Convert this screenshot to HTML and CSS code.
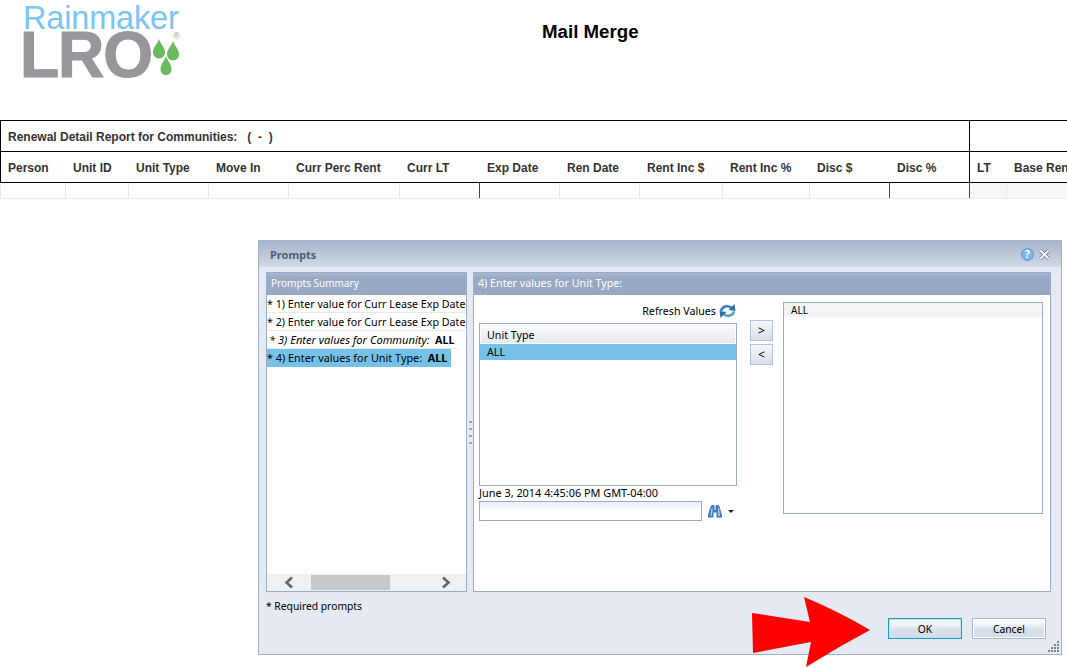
FILE: index.html
```html
<!DOCTYPE html>
<html lang="en">
<head>
    <meta charset="UTF-8">
    <meta name="viewport" content="width=device-width, initial-scale=1.0">
    <title>Mail Merge</title>
    <link rel="stylesheet" href="styles.css">
</head>
<body>
    <header class="page-head">
        <div class="logo">
            <div class="logo-top">Rainmaker</div>
            <div class="logo-main">LRO</div>
            <span class="logo-reg">®</span>
            <svg class="logo-drops" width="27" height="37" viewBox="0 0 27 37">
                <path fill="#6cba5f" d="M6 0C7.500 5 12 8 12 13.500a6 6 0 0 1-12 0C0 8 4.500 5 6 0Z"/>
                <path fill="#6cba5f" d="M20 2C21.500 7 26 10 26 15.500a6 6 0 0 1-12 0C14 10 18.500 7 20 2Z"/>
                <path fill="#6cba5f" d="M13 17C14.500 22 18.500 25 18.500 30.500a5.500 5.500 0 0 1-11 0C7.500 25 11.500 22 13 17Z"/>
            </svg>
        </div>
        <h1 class="page-title">Mail Merge</h1>
    </header>

    <section class="report">
        <div class="report-row row-title">
            <div class="report-name">Renewal Detail Report for Communities: &nbsp; ( &nbsp;- &nbsp;)</div>
            <div class="report-side"></div>
        </div>
        <div class="report-row row-head">
            <div class="row-start">Person</div><div>Unit ID</div><div>Unit Type</div><div>Move In</div>
            <div>Curr Perc Rent</div><div>Curr LT</div><div>Exp Date</div><div>Ren Date</div>
            <div>Rent Inc $</div><div>Rent Inc %</div><div>Disc $</div><div>Disc %</div>
            <div class="side-start">LT</div><div>Base Rent</div>
        </div>
        <div class="report-row row-data">
            <div></div><div></div><div></div><div></div><div></div><div></div>
            <div class="blue-left"></div><div></div><div></div><div></div><div></div>
            <div class="blue-left"></div>
            <div class="blue-left tinted"></div><div class="tinted"></div>
        </div>
    </section>

    <div class="dialog">
        <div class="dialog-title">
            <span class="dialog-name">Prompts</span>
            <svg class="help-icon" width="13" height="13" viewBox="0 0 13 13">
                <circle cx="6.500" cy="6.500" r="6" fill="#7fb6ea" stroke="#5b93d8"/>
                <text x="6.500" y="10" text-anchor="middle" class="help-mark">?</text>
            </svg>
            <svg class="close-icon" width="11" height="11" viewBox="0 0 11 11">
                <path d="M1.500 1.500l8 8M9.500 1.500l-8 8" stroke="#5f6b7e" stroke-width="3.400"/>
                <path d="M1.500 1.500l8 8M9.500 1.500l-8 8" stroke="#fff" stroke-width="2"/>
            </svg>
        </div>

        <div class="dialog-body">
            <div class="panel panel-left">
                <div class="panel-head">Prompts Summary</div>
                <ul class="summary">
                    <li>* 1) Enter value for Curr Lease Exp Date</li>
                    <li>* 2) Enter value for Curr Lease Exp Date</li>
                    <li class="optional"><em>* 3) Enter values for Community:</em>&nbsp; <b>ALL</b></li>
                    <li class="current"><span>* 4) Enter values for Unit Type:&nbsp; <b>ALL</b></span></li>
                </ul>
                <div class="hscroll">
                    <svg width="13" height="13" viewBox="0 0 13 13"><path d="M9 1.500 3.500 6.500 9 11.500" fill="none" stroke="#666" stroke-width="2.600"/></svg>
                    <div class="hscroll-track"><div class="hscroll-thumb"></div></div>
                    <svg width="13" height="13" viewBox="0 0 13 13"><path d="M4 1.500 9.500 6.500 4 11.500" fill="none" stroke="#666" stroke-width="2.600"/></svg>
                </div>
            </div>

            <div class="splitter">
                <i></i><i></i><i></i><i></i>
            </div>

            <div class="panel panel-right">
                <div class="panel-head head-wide">4) Enter values for Unit Type:</div>
                <div class="picker">
                    <div class="picker-left">
                        <div class="refresh">
                            <span>Refresh Values</span>
                            <svg width="17" height="16" viewBox="0 0 17 16">
                                <path fill="none" stroke="#3d7fb5" stroke-width="2.600" d="M2 8C3 3.500 8.500 1.500 12.500 5"/>
                                <path fill="#2f6fa8" d="M9.500 7 16.500 8 15.500 1Z"/>
                                <path fill="none" stroke="#5b9bd0" stroke-width="2.600" d="M15 8.500C14 12.500 8.500 14.500 4.500 11"/>
                                <path fill="#2f6fa8" d="M7.500 9 .5 8 1.500 15Z"/>
                            </svg>
                        </div>
                        <div class="value-list">
                            <div class="value-head">Unit Type</div>
                            <div class="value-row">ALL</div>
                        </div>
                        <div class="value-date">June 3, 2014 4:45:06 PM GMT-04:00</div>
                        <div class="search-line">
                            <div class="search-box"></div>
                            <svg class="binoculars" width="14" height="13" viewBox="0 0 14 13">
                                <path fill="#3b7dbd" d="M2.500 1.500 4 0h2l.5 1.500V5h1V1.500L8 0h2l1.500 1.500L14 10v2.500H8.500V7.500h-3v5H0V10Z"/>
                                <path fill="#bcd7f0" d="M3.500 3h1v3l-1 5h-1ZM10 3h1l1 8h-1.500Z"/>
                            </svg>
                            <span class="caret"></span>
                        </div>
                    </div>
                    <div class="move-btns">
                        <button class="move-btn">&gt;</button>
                        <button class="move-btn">&lt;</button>
                    </div>
                    <div class="chosen-list">
                        <div class="chosen-row">ALL</div>
                    </div>
                </div>
            </div>
        </div>

        <div class="dialog-foot">
            <span class="req-note">* Required prompts</span>
            <div class="foot-btns">
                <button class="btn btn-ok">OK</button>
                <button class="btn">Cancel</button>
            </div>
        </div>

        <svg class="grip" width="11" height="11" viewBox="0 0 11 11">
            <path fill="#7b8797" d="M9 0h2v2H9zM6 3h2v2H6zM9 3h2v2H9zM3 6h2v2H3zM6 6h2v2H6zM9 6h2v2H9zM0 9h2v2H0zM3 9h2v2H3zM6 9h2v2H6zM9 9h2v2H9z"/>
        </svg>
        <svg class="red-arrow" width="120" height="72" viewBox="0 0 120 72">
            <path fill="#ff0000" d="M0 16 58 25 52 0Q86 14 118 33 86 50 54 70L59 45 1 56Z"/>
        </svg>
    </div>
</body>
</html>
```

FILE: styles.css
```css
* {
    box-sizing: border-box;
}
html, body {
    height: 100%;
}
body {
    margin: 0;
    overflow: hidden;
    background: #fff;
    font-family: "Liberation Sans", Arial, sans-serif;
    color: #000;
}

/* page header */
.page-head {
    display: flex;
    height: 120px;
}
.logo {
    position: relative;
    width: 160px;
    margin-left: 24px;
    height: 84px;
}
.logo-top {
    height: 32px;
    padding-top: 5px;
    margin-left: -1px;
    font-size: 32.4px;
    line-height: 26px;
    letter-spacing: -0.1px;
    color: #7cc4f1;
}
.logo-main {
    height: 46px;
    margin-left: -4px;
    font-size: 64px;
    line-height: 46px;
    font-weight: bold;
    letter-spacing: -1px;
    color: #97979b;
    -webkit-text-stroke: 1.2px #97979b;
}
.logo-reg {
    position: absolute;
    left: 149px;
    top: 31px;
    font-size: 9px;
    line-height: 10px;
    color: #97979b;
}
.logo-drops {
    position: absolute;
    left: 129px;
    top: 39px;
}
.page-title {
    margin: 21px 0 0 358px;
    font-size: 18.7px;
    line-height: 22px;
    font-weight: bold;
}

/* report table */
.report {
    overflow: hidden;
    font-size: 12px;
    font-weight: bold;
    color: #333;
}
.report-row {
    display: grid;
    width: 1201px;
    grid-template-columns: 65px 63px 80px 80px 111px 80px 80px 80px 83px 87px 80px 80px 37px 195px;
}
.row-title {
    height: 32px;
    border-top: 1px solid #000;
    border-bottom: 1px solid #000;
}
.report-name {
    grid-column: 1 / 13;
    padding-left: 7px;
    line-height: 32px;
    border-left: 1px solid #000;
}
.report-side {
    grid-column: 13 / 15;
    border-left: 1px solid #000;
}
.row-head {
    height: 31px;
    border-bottom: 1px solid #000;
    line-height: 32px;
}
.row-head > div {
    padding-left: 8px;
}
.row-head .row-start {
    padding-left: 7px;
    border-left: 1px solid #000;
}
.row-head .side-start {
    padding-left: 7px;
    border-left: 1px solid #000;
}
.row-data {
    height: 16px;
    border-bottom: 1px solid #e9e9e9;
}
.row-data > div {
    border-left: 1px solid #e9e9e9;
}
.row-data .blue-left {
    border-left-color: #1f4f80;
}
.row-data .tinted {
    background: #f4f8f8;
}

/* prompts dialog */
.dialog {
    position: relative;
    width: 804px;
    height: 415px;
    margin: 41px 0 0 258px;
    border: 1px solid #a3b1c9;
    background: #e4e9f2;
    font-family: "Noto Sans", Tahoma, sans-serif;
    font-size: 10.7px;
}
.dialog-title {
    display: flex;
    align-items: center;
    height: 26px;
    padding: 0 11px 0 11px;
    background: linear-gradient(#a7b4ca, #d1d9e6);
}
.dialog-name {
    flex: 1;
    font-size: 11px;
    font-weight: bold;
    color: #4f5c75;
}
.help-icon {
    margin-right: 5px;
}
.help-mark {
    font-size: 10px;
    font-weight: bold;
    fill: #fff;
}
.dialog-body {
    display: flex;
    height: 320px;
    margin: 5px 0 0 7px;
}
.panel {
    display: flex;
    flex-direction: column;
    border: 1px solid #9aabc6;
    background: #fff;
}
.panel-left {
    width: 201px;
}
.panel-right {
    width: 578px;
}
.panel-head {
    height: 22px;
    padding-left: 4px;
    line-height: 21px;
    color: #fff;
    font-size: 10px;
    background: linear-gradient(#aab8cf, #98a9c5 25%);
}
.head-wide {
    font-size: 10.7px;
}
.summary {
    flex: 1;
    margin: 0;
    padding: 0;
    list-style: none;
}
.summary li {
    height: 18px;
    line-height: 18px;
    border-bottom: 1px solid #e8e8e8;
    white-space: nowrap;
    overflow: hidden;
}
.summary .optional {
    margin-right: 8px;
    padding-left: 2px;
}
.summary .optional em {
    font-size: 11.1px;
}
.summary .current {
    border: 0;
}
.summary .current span {
    display: block;
    width: 184px;
    height: 18px;
    font-size: 10.85px;
    background: #75c1e8;
}
.hscroll {
    display: flex;
    align-items: center;
    height: 17px;
    padding: 0 14px 0 16px;
    background: #f0f0f0;
}
.hscroll-track {
    flex: 1;
    height: 15px;
    padding-left: 15px;
}
.hscroll-thumb {
    width: 79px;
    height: 15px;
    background: #c9c9c9;
}
.splitter {
    display: flex;
    flex-direction: column;
    justify-content: center;
    align-items: center;
    gap: 5px;
    width: 6px;
}
.splitter i {
    width: 3px;
    height: 2px;
    background: #98a4b6;
}

/* value picker */
.picker {
    display: flex;
    padding: 7px 0 0 5px;
}
.picker-left {
    width: 258px;
}
.refresh {
    display: flex;
    justify-content: flex-end;
    align-items: center;
    gap: 3px;
    height: 21px;
    padding: 0 1px 3px 0;
}
.value-list {
    height: 163px;
    border: 1px solid #9aabc6;
}
.value-head {
    height: 20px;
    padding-left: 6px;
    line-height: 21px;
    border: 1px solid #fff;
    background: linear-gradient(#fbfbfc, #e6e9ef);
}
.value-row {
    height: 16px;
    padding-left: 7px;
    line-height: 16px;
    background: #75c1e8;
}
.value-date {
    height: 15px;
    line-height: 14px;
    font-size: 10.9px;
    white-space: nowrap;
}
.search-line {
    display: flex;
    align-items: center;
}
.search-box {
    width: 223px;
    height: 20px;
    border: 1px solid #9aabc6;
    background: linear-gradient(#e9eff8, #fff 50%);
}
.binoculars {
    margin-left: 6px;
}
.caret {
    margin-left: 6px;
    border-top: 3px solid #222;
    border-left: 3px solid transparent;
    border-right: 3px solid transparent;
}
.move-btns {
    display: flex;
    flex-direction: column;
    gap: 3px;
    margin: 18px 0 0 13px;
}
.move-btn {
    width: 23px;
    height: 21px;
    padding: 0;
    border: 1px solid #b4c0d4;
    background: linear-gradient(#f5f7fa, #d8dfea);
    font: 12px "Noto Sans", Tahoma, sans-serif;
    color: #000;
}
.chosen-list {
    width: 260px;
    height: 212px;
    margin-left: 10px;
    border: 1px solid #9aabc6;
}
.chosen-row {
    height: 14px;
    padding-left: 7px;
    line-height: 15px;
    font-size: 10px;
    background: #f4f4f6;
}

/* footer */
.dialog-foot {
    display: flex;
    justify-content: space-between;
    margin: 0 15px 0 7px;
}
.req-note {
    padding-top: 7px;
    font-size: 10.3px;
}
.foot-btns {
    display: flex;
    gap: 10px;
    padding-top: 26px;
}
.btn {
    width: 74px;
    height: 21px;
    padding: 0;
    border: 1px solid #a9b7cd;
    box-shadow: inset 0 0 0 1px #fff;
    background: linear-gradient(#f7f8fb 20%, #d6deea 60%);
    font: 10.3px "Noto Sans", Tahoma, sans-serif;
    color: #000;
}
.btn-ok {
    border-color: #1c9cc5;
    box-shadow: inset 0 0 0 1px #bfe3f0;
}
.grip {
    position: absolute;
    right: 2px;
    bottom: 2px;
}
.red-arrow {
    position: absolute;
    left: 493px;
    top: 356px;
}
```
